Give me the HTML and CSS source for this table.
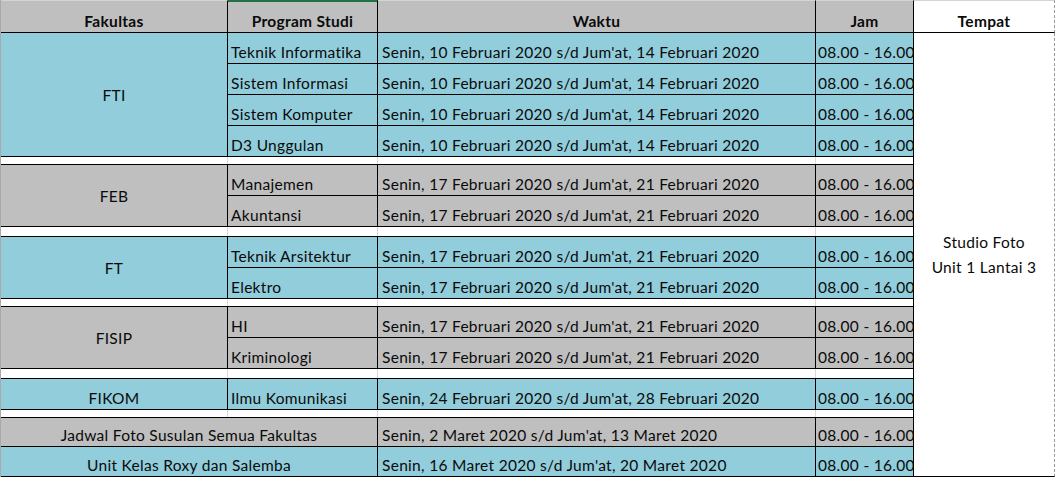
FILE: index.html
```html
<!DOCTYPE html>
<html lang="id">
<head>
<meta charset="utf-8">
<title>Jadwal Foto</title>
<link rel="stylesheet" href="styles.css">
</head>
<body>
<div class="sheet">
  <div class="c hd gray">Fakultas</div>
  <div class="c hd gray sel">Program Studi</div>
  <div class="c hd gray">Waktu</div>
  <div class="c hd gray">Jam</div>
  <div class="c hd white last">Tempat</div>

  <div class="c fak blue r4">FTI</div>
  <div class="c txt blue">Teknik Informatika</div>
  <div class="c txt wk blue">Senin, 10 Februari 2020 s/d Jum'at, 14 Februari 2020</div>
  <div class="c txt jam blue">08.00 - 16.00</div>
  <div class="c tempat last"><span>Studio Foto</span><span>Unit 1 Lantai 3</span></div>
  <div class="c txt blue">Sistem Informasi</div>
  <div class="c txt wk blue">Senin, 10 Februari 2020 s/d Jum'at, 14 Februari 2020</div>
  <div class="c txt jam blue">08.00 - 16.00</div>
  <div class="c txt blue">Sistem Komputer</div>
  <div class="c txt wk blue">Senin, 10 Februari 2020 s/d Jum'at, 14 Februari 2020</div>
  <div class="c txt jam blue">08.00 - 16.00</div>
  <div class="c txt blue">D3 Unggulan</div>
  <div class="c txt wk blue">Senin, 10 Februari 2020 s/d Jum'at, 14 Februari 2020</div>
  <div class="c txt jam blue">08.00 - 16.00</div>

  <div class="gap"></div><div class="gap"></div><div class="gap"></div><div class="gap g4"></div>

  <div class="c fak gray top r2">FEB</div>
  <div class="c txt gray top">Manajemen</div>
  <div class="c txt wk gray top">Senin, 17 Februari 2020 s/d Jum'at, 21 Februari 2020</div>
  <div class="c txt jam gray top">08.00 - 16.00</div>
  <div class="c txt gray">Akuntansi</div>
  <div class="c txt wk gray">Senin, 17 Februari 2020 s/d Jum'at, 21 Februari 2020</div>
  <div class="c txt jam gray">08.00 - 16.00</div>

  <div class="gap"></div><div class="gap"></div><div class="gap"></div><div class="gap g4"></div>

  <div class="c fak blue top r2">FT</div>
  <div class="c txt blue top">Teknik Arsitektur</div>
  <div class="c txt wk blue top">Senin, 17 Februari 2020 s/d Jum'at, 21 Februari 2020</div>
  <div class="c txt jam blue top">08.00 - 16.00</div>
  <div class="c txt blue">Elektro</div>
  <div class="c txt wk blue">Senin, 17 Februari 2020 s/d Jum'at, 21 Februari 2020</div>
  <div class="c txt jam blue">08.00 - 16.00</div>

  <div class="gap"></div><div class="gap"></div><div class="gap"></div><div class="gap g4"></div>

  <div class="c fak gray top r2">FISIP</div>
  <div class="c txt gray top">HI</div>
  <div class="c txt wk gray top">Senin, 17 Februari 2020 s/d Jum'at, 21 Februari 2020</div>
  <div class="c txt jam gray top">08.00 - 16.00</div>
  <div class="c txt gray">Kriminologi</div>
  <div class="c txt wk gray">Senin, 17 Februari 2020 s/d Jum'at, 21 Februari 2020</div>
  <div class="c txt jam gray">08.00 - 16.00</div>

  <div class="gap"></div><div class="gap"></div><div class="gap"></div><div class="gap g4"></div>

  <div class="c txt mid blue top">FIKOM</div>
  <div class="c txt blue top">Ilmu Komunikasi</div>
  <div class="c txt wk blue top">Senin, 24 Februari 2020 s/d Jum'at, 28 Februari 2020</div>
  <div class="c txt jam blue top">08.00 - 16.00</div>

  <div class="gap"></div><div class="gap"></div><div class="gap"></div><div class="gap g4"></div>

  <div class="c txt mid gray top c2">Jadwal Foto Susulan Semua Fakultas</div>
  <div class="c txt wk gray top">Senin, 2 Maret 2020 s/d Jum'at, 13 Maret 2020</div>
  <div class="c txt jam gray top">08.00 - 16.00</div>

  <div class="c txt mid blue c2">Unit Kelas Roxy dan Salemba</div>
  <div class="c txt wk blue">Senin, 16 Maret 2020 s/d Jum'at, 20 Maret 2020</div>
  <div class="c txt jam blue">08.00 - 16.00</div>
</div>
</body>
</html>
```

FILE: styles.css
```css
html, body {
  margin: 0;
  padding: 0;
  background: #ffffff;
}

body {
  font-family: Lato, "Open Sans", "Liberation Sans", sans-serif;
  font-size: 15.5px;
  letter-spacing: 0.3px;
  font-variant-ligatures: none;
  color: #0a0a0a;
}

.sheet {
  display: grid;
  grid-template-columns: 227px 150px 438px 98px 141px;
  grid-template-rows: 33px 31px 31px 31px 31px 7px 32px 31px 9px 32px 31px 7px 32px 31px 9px 32px 7px 30px 30px;
  width: 1055px;
  border-left: 1px solid #a9a9a9;
}

.c {
  box-sizing: border-box;
  border-right: 1px solid #000;
  border-bottom: 1px solid #000;
  overflow: hidden;
  white-space: nowrap;
  line-height: 18px;
}

.blue { background: #92cddc; }
.gray { background: #bfbfbf; }
.white { background: #ffffff; }

.top { border-top: 1px solid #000; }

.hd {
  font-weight: 700;
  display: flex;
  align-items: flex-end;
  justify-content: center;
  padding-bottom: 2px;
  border-top: 1px solid #d4d4d4;
}

.sel { box-shadow: inset 0 1px 0 #217346; border-top-color: #217346; }

.last { border-right: 1px dashed #9a9a9a; }

.txt {
  display: flex;
  align-items: flex-end;
  padding: 0 0 2px 3px;
}

.wk { padding-left: 4px; }
.jam { padding-left: 2px; }

.mid { justify-content: center; padding-left: 0; }

.fak {
  display: flex;
  align-items: center;
  justify-content: center;
}

.r4 { grid-row: span 4; }
.r2 { grid-row: span 2; }
.c2 { grid-column: span 2; }

.tempat {
  grid-row: span 18;
  background: #ffffff;
  display: flex;
  flex-direction: column;
  align-items: center;
  justify-content: center;
  line-height: 25px;
}

.gap {
  background: #ffffff;
  border-right: 1px solid #d9d9d9;
}

.g4 { border-right-color: #000; }
```
